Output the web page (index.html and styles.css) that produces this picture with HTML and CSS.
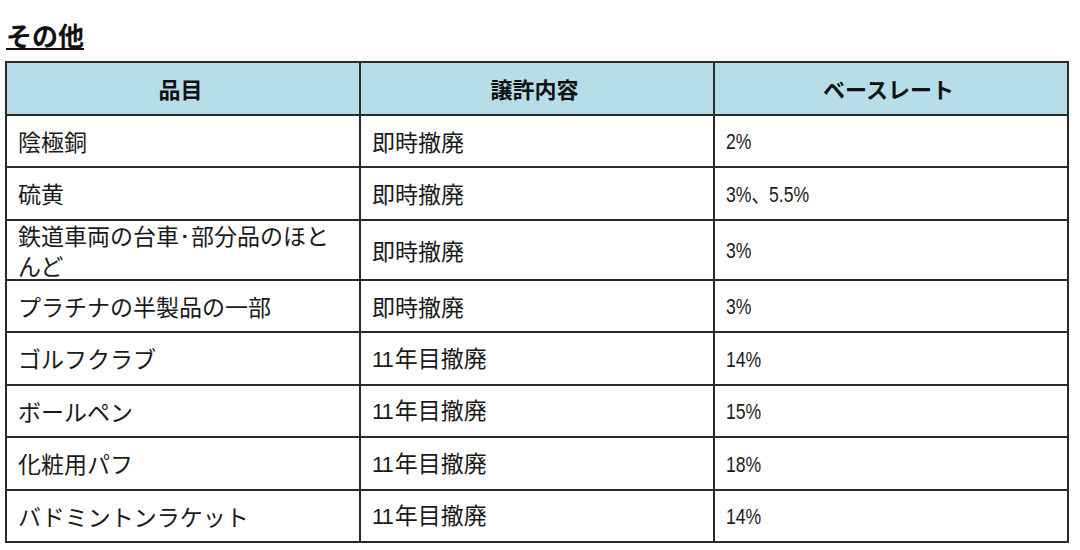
FILE: index.html
```html
<!DOCTYPE html>
<html lang="ja">
<head>
<meta charset="utf-8">
<link rel="stylesheet" href="styles.css">
</head>
<body>
<h2 class="title">その他</h2>
<table class="grid">
  <colgroup><col class="c"><col class="c"><col class="c"></colgroup>
  <thead>
    <tr><th>品目</th><th>譲許内容</th><th>ベースレート</th></tr>
  </thead>
  <tbody>
    <tr><td>陰極銅</td><td>即時撤廃</td><td><span class="pct">2%</span></td></tr>
    <tr><td>硫黄</td><td>即時撤廃</td><td><span class="pct">3%、5.5%</span></td></tr>
    <tr><td class="wrap">鉄道車両の台車<span class="dot">･</span>部分品のほとんど</td><td>即時撤廃</td><td><span class="pct">3%</span></td></tr>
    <tr><td>プラチナの半製品の一部</td><td>即時撤廃</td><td><span class="pct">3%</span></td></tr>
    <tr><td>ゴルフクラブ</td><td><span class="yr">11</span>年目撤廃</td><td><span class="pct">14%</span></td></tr>
    <tr><td>ボールペン</td><td><span class="yr">11</span>年目撤廃</td><td><span class="pct">15%</span></td></tr>
    <tr><td>化粧用パフ</td><td><span class="yr">11</span>年目撤廃</td><td><span class="pct">18%</span></td></tr>
    <tr><td>バドミントンラケット</td><td><span class="yr">11</span>年目撤廃</td><td><span class="pct">14%</span></td></tr>
  </tbody>
</table>
</body>
</html>
```
FILE: styles.css
```css
html, body {
  margin: 0;
  padding: 0;
  background: #ffffff;
}
body {
  padding: 0 0 0 5px;
  font-family: "Noto Sans CJK JP", "Noto Sans", sans-serif;
  color: #1a1a1a;
}
.title {
  margin: 0;
  padding: 20px 0 0 1px;
  height: 61px;
  box-sizing: border-box;
  font-size: 26px;
  line-height: 30px;
  font-weight: 700;
  text-decoration: underline;
  text-decoration-thickness: 2px;
  text-underline-offset: 2px;
  color: #111;
}
.grid {
  border-collapse: collapse;
  width: 1064px;
  table-layout: fixed;
}
.grid th, .grid td {
  border: 2px solid #2b2b2b;
  height: 52.5px;
  box-sizing: border-box;
  padding: 0 16px 0 11px;
  font-size: 23px;
  line-height: 28px;
  text-align: left;
  vertical-align: middle;
}
.grid th {
  background: #b7dde8;
  text-align: center;
  font-weight: 700;
  font-size: 22px;
  color: #111;
}
.grid td {
  font-weight: 400;
}
.dot {
  font-family: "Liberation Sans", sans-serif;
}
.yr {
  font-family: "Liberation Sans", Arial, sans-serif;
  font-size: 22px;
  letter-spacing: -1px;
  margin-right: 2px;
}
.pct {
  display: inline-block;
  font-family: "Liberation Sans", Arial, "Noto Sans CJK JP", sans-serif;
  font-size: 22px;
  transform: scaleX(0.8);
  transform-origin: left center;
  white-space: nowrap;
}
```
